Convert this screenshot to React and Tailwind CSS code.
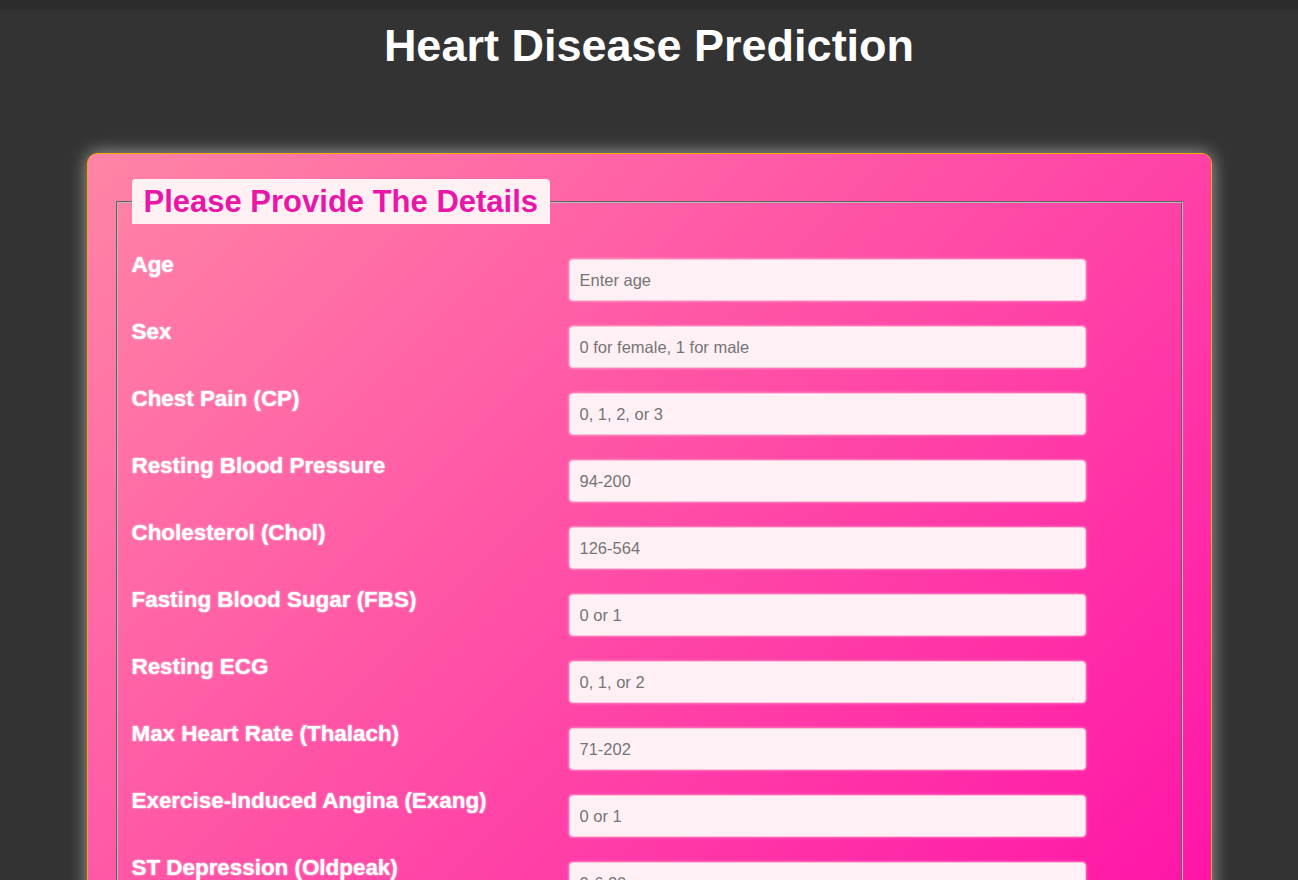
import React from "react";

const fields = [
  ["Age", "Enter age"],
  ["Sex", "0 for female, 1 for male"],
  ["Chest Pain (CP)", "0, 1, 2, or 3"],
  ["Resting Blood Pressure", "94-200"],
  ["Cholesterol (Chol)", "126-564"],
  ["Fasting Blood Sugar (FBS)", "0 or 1"],
  ["Resting ECG", "0, 1, or 2"],
  ["Max Heart Rate (Thalach)", "71-202"],
  ["Exercise-Induced Angina (Exang)", "0 or 1"],
  ["ST Depression (Oldpeak)", "0-6.20"],
  ["Slope", "0, 1, or 2"],
  ["Number of Major Vessels (CA)", "0-3"],
  ["Thalassemia (Thal)", "1, 2, or 3"],
];

export default function App() {
  return (
    <div className="min-h-screen bg-[#333333] font-['Liberation_Sans',Arial,sans-serif]">
      <div className="h-[10px] bg-[#2c2c2c]" />
      <h1 className="pt-[10px] text-center text-[45px] font-bold leading-[52px] text-white">
        Heart Disease Prediction
      </h1>
      <div className="mx-auto mt-[81px] w-[1125px] rounded-[10px] border border-[#ffa500] bg-[linear-gradient(135deg,#ff85a5,#ff00a8)] px-[28px] pt-[25px] pb-[30px] shadow-[0_0_18px_rgba(255,255,255,0.55)]">
        <fieldset className="border-2 border-[#b8b8b8] [border-style:groove] px-[14px] pb-[20px]">
          <legend className="rounded-t-[4px] bg-[#fff0f3] px-[12px] py-[5px] text-[31px] font-bold leading-[35px] text-[#e817a8]">
            Please Provide The Details
          </legend>
          <div className="pt-[28px]">
            {fields.map(([label, ph]) => (
              <div key={label} className="mb-[18px] flex items-start">
                <label className="w-[437px] shrink-0 text-[22.4px] font-bold leading-[25px] text-white [text-shadow:0_0_2px_rgba(255,255,255,0.9)]">
                  {label}
                </label>
                <input
                  type="text"
                  placeholder={ph}
                  className="mt-[7px] h-[42px] w-[517px] rounded-[4px] border border-[#ffc2da] bg-[#fff0f5] px-[10px] text-[16.5px] text-[#333] placeholder:text-[#757575] outline-none shadow-[0_0_3px_rgba(255,255,255,0.6)]"
                />
              </div>
            ))}
            <button className="mt-[10px] rounded-[6px] bg-[#fff0f5] px-[24px] py-[12px] text-[20px] font-bold text-[#e817a8]">
              Predict
            </button>
          </div>
        </fieldset>
      </div>
      <div className="h-[40px]" />
    </div>
  );
}
